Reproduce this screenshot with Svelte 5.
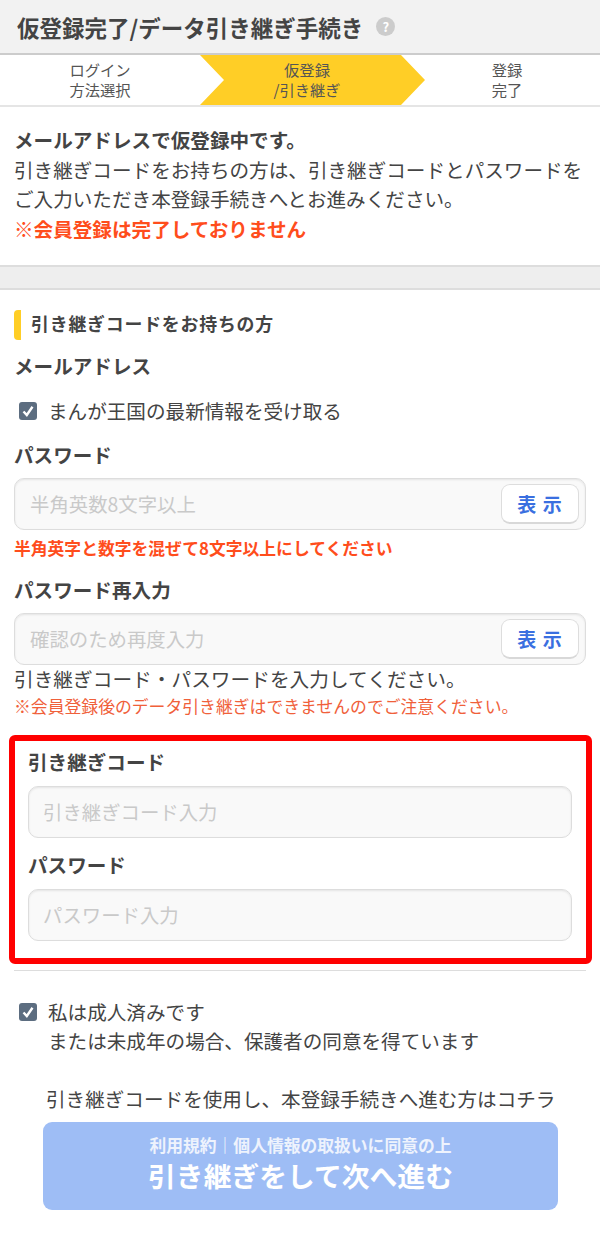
<script>
	const steps = [
		{ top: 'ログイン', bottom: '方法選択' },
		{ top: '仮登録', bottom: '/引き継ぎ', active: true },
		{ top: '登録', bottom: '完了' }
	];
</script>

<header class="title">
	<h1>仮登録完了/データ引き継ぎ手続き</h1>
	<span class="help">?</span>
</header>

<ol class="steps">
	{#each steps as step}
		<li class:active={step.active}><span>{step.top}</span><span>{step.bottom}</span></li>
	{/each}
</ol>

<section class="notice">
	<p class="strong">メールアドレスで仮登録中です。</p>
	<p>引き継ぎコードをお持ちの方は、引き継ぎコードとパスワードをご入力いただき本登録手続きへとお進みください。</p>
	<p class="warn">※会員登録は完了しておりません</p>
</section>

<div class="band"></div>

<main>
	<h2>引き継ぎコードをお持ちの方</h2>

	<h3 class="mail">メールアドレス</h3>
	<label class="check news">
		<span class="box"><svg viewBox="0 0 18 18" width="18" height="18"><path d="M4.5 9.5 L7.8 13 L13.5 4.8" fill="none" stroke="#fff" stroke-width="2.4" /></svg></span>
		<span>まんが王国の最新情報を受け取る</span>
	</label>

	<h3 class="pw">パスワード</h3>
	<div class="field">
		<input type="text" placeholder="半角英数8文字以上" />
		<button type="button">表 示</button>
	</div>
	<p class="error">半角英字と数字を混ぜて8文字以上にしてください</p>

	<h3 class="pw2">パスワード再入力</h3>
	<div class="field">
		<input type="text" placeholder="確認のため再度入力" />
		<button type="button">表 示</button>
	</div>

	<p class="enter">引き継ぎコード・パスワードを入力してください。</p>
	<p class="caution">※会員登録後のデータ引き継ぎはできませんのでご注意ください。</p>

	<div class="redbox">
		<h3>引き継ぎコード</h3>
		<input class="plain" type="text" placeholder="引き継ぎコード入力" />
		<h3 class="second">パスワード</h3>
		<input class="plain" type="text" placeholder="パスワード入力" />
	</div>

	<hr />

	<label class="check adult">
		<span class="box"><svg viewBox="0 0 18 18" width="18" height="18"><path d="M4.5 9.5 L7.8 13 L13.5 4.8" fill="none" stroke="#fff" stroke-width="2.4" /></svg></span>
		<span>私は成人済みです<br />または未成年の場合、保護者の同意を得ています</span>
	</label>

	<p class="lead">引き継ぎコードを使用し、本登録手続きへ進む方はコチラ</p>
	<button type="button" class="next">
		<small>利用規約｜個人情報の取扱いに同意の上</small>
		<strong>引き継ぎをして次へ進む</strong>
	</button>
</main>

<style>
	:global(body) {
		background: #fff;
		color: #444;
		font-family: "Noto Sans CJK JP", "Noto Sans", sans-serif;
	}

	h1, h2, h3, p, ol {
		margin: 0;
		padding: 0;
	}

	.title {
		display: flex;
		align-items: center;
		gap: 13px;
		height: 53px;
		padding-left: 17px;
		box-sizing: content-box;
		background: #f2f2f2;
		border-bottom: 2px solid #ccc;
	}

	h1 {
		font-size: 22.5px;
		font-weight: 700;
		color: #444;
	}

	.help {
		width: 19px;
		height: 19px;
		border-radius: 50%;
		background: #ccc;
		color: #fff;
		font-size: 13px;
		font-weight: 700;
		line-height: 19px;
		text-align: center;
	}

	.steps {
		display: grid;
		grid-template-columns: 200px 225px 175px;
		height: 50px;
		list-style: none;
		border-bottom: 2px solid #e5e5e5;
	}

	.steps li {
		display: flex;
		flex-direction: column;
		align-items: center;
		justify-content: center;
		padding-bottom: 2px;
		font-size: 15.3px;
		line-height: 20px;
		color: #555;
	}

	.steps li:not(:first-child) {
		padding-right: 11px;
	}

	.steps li.active {
		background: #ffce26;
		clip-path: polygon(0 0, 201px 0, 225px 50%, 201px 100%, 0 100%, 24px 50%);
	}

	.notice {
		height: 160px;
		padding: 18px 14px 0;
		box-sizing: border-box;
		font-size: 19.6px;
		line-height: 29.5px;
		border-bottom: 2px solid #ddd;
	}

	.strong {
		font-weight: 700;
	}

	.warn {
		color: #ff4d1c;
		font-weight: 700;
	}

	.band {
		height: 21px;
		background: #eee;
		border-bottom: 2px solid #ddd;
	}

	main {
		padding: 0 14px;
	}

	h2 {
		margin-top: 20px;
		padding-left: 10px;
		border-left: 7px solid #ffce26;
		border-radius: 4px;
		height: 30px;
		font-size: 17.9px;
		line-height: 27px;
		font-weight: 700;
		letter-spacing: 0.8px;
	}

	h3 {
		font-size: 19.6px;
		line-height: 28px;
		font-weight: 700;
	}

	.mail {
		margin-top: 12px;
	}

	.check {
		display: flex;
		gap: 11px;
		padding-left: 5px;
		font-size: 19.6px;
		line-height: 29.5px;
	}

	.box {
		flex: none;
		width: 18px;
		height: 18px;
		margin-top: 6px;
		border-radius: 3px;
		background: #5c6d80;
		display: block;
	}

	.box svg {
		display: block;
	}

	.news {
		margin-top: 16px;
	}

	.pw {
		margin-top: 15px;
		margin-bottom: 9px;
	}

	.pw2 {
		margin-top: 16px;
		margin-bottom: 9px;
	}

	.field {
		display: flex;
		align-items: center;
		height: 52px;
		box-sizing: border-box;
		padding: 0 6px 0 15px;
		background: #f9f9f9;
		border: 1px solid #ddd;
		border-radius: 10px;
		box-shadow: inset 0 1px 2px #e4e4e4;
	}

	input {
		font-family: inherit;
		font-size: 19.4px;
		color: #444;
	}

	input::placeholder {
		color: #c9c9c9;
		opacity: 1;
	}

	.field input {
		flex: 1;
		min-width: 0;
		border: none;
		background: none;
		padding: 0;
		outline: none;
	}

	.field button {
		width: 78px;
		height: 40px;
		padding: 0;
		background: #fff;
		border: 1px solid #ddd;
		border-bottom: 2px solid #d8d8d8;
		border-radius: 9px;
		color: #3a6fe0;
		font-family: inherit;
		font-size: 19px;
		font-weight: 700;
		letter-spacing: 1px;
	}

	.error {
		margin-top: 6px;
		color: #ff4d1c;
		font-size: 16.8px;
		line-height: 24px;
		font-weight: 700;
	}

	.enter {
		margin-top: -1px;
		font-size: 19.7px;
		line-height: 29px;
	}

	.caution {
		font-size: 16.84px;
		line-height: 26px;
		color: #f0603a;
	}

	.redbox {
		margin: 16px -6px 0 -5px;
		padding: 7px 14px 16px 13px;
		height: 229px;
		box-sizing: border-box;
		border: 6px solid #f00;
		border-radius: 6px;
	}

	.plain {
		display: block;
		width: 100%;
		height: 52px;
		margin-top: 10px;
		padding: 0 14px;
		box-sizing: border-box;
		background: #f9f9f9;
		border: 1px solid #ddd;
		border-radius: 10px;
		box-shadow: inset 0 1px 2px #e4e4e4;
		outline: none;
	}

	.second {
		margin-top: 13px;
	}

	hr {
		margin: 6px 0 0;
		border: none;
		border-top: 1px solid #ddd;
	}

	.adult {
		margin-top: 26px;
		line-height: 29.5px;
	}

	.lead {
		margin-top: 28px;
		padding-left: 32px;
		font-size: 19.6px;
		line-height: 29px;
	}

	.next {
		display: flex;
		flex-direction: column;
		align-items: center;
		justify-content: center;
		width: 515px;
		height: 88px;
		margin: 9px 0 0 29px;
		padding: 1px 0 5px;
		background: #9ebdf5;
		border: none;
		border-radius: 9px;
		color: #fff;
		font-family: inherit;
	}

	.next small {
		margin-bottom: -1px;
		font-size: 16.8px;
		line-height: 24px;
		font-weight: 700;
		color: #eef3fd;
	}

	.next strong {
		font-size: 27.8px;
		line-height: 38px;
		font-weight: 700;
	}
</style>
